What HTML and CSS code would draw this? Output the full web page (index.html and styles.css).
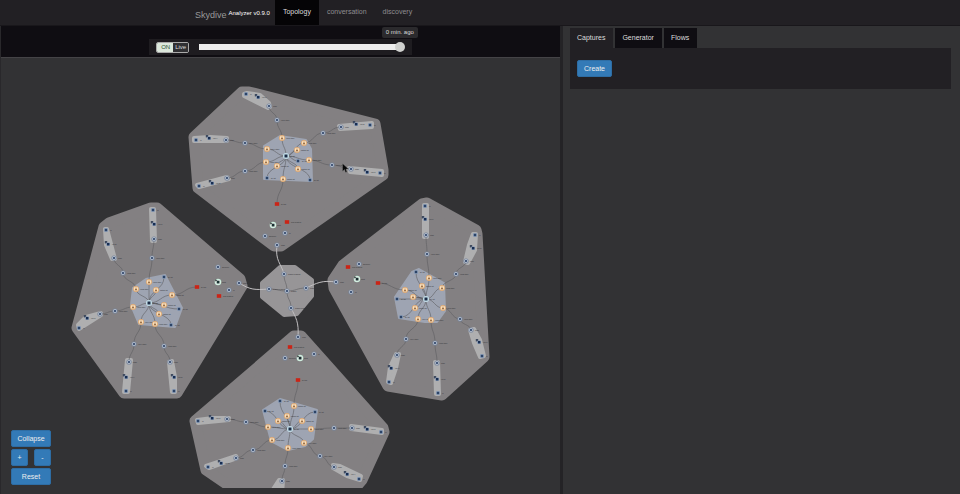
FILE: index.html
```html
<!DOCTYPE html>
<html lang="en">
<head>
<meta charset="utf-8">
<title>Skydive Analyzer</title>
<link rel="stylesheet" href="styles.css">
</head>
<body>
<header class="navbar">
  <nav class="navbar-inner">
    <div class="brand"><span class="brand-name">Skydive</span><span class="brand-version">Analyzer v0.9.0</span></div>
    <a class="nav-link active" href="#topology">Topology</a>
    <a class="nav-link" href="#conversation">conversation</a>
    <a class="nav-link" href="#discovery">discovery</a>
  </nav>
</header>
<main class="content">
  <section class="topology">
    <div class="timebar">
      <div class="time-control">
        <label class="toggle"><input type="checkbox" checked><span class="toggle-on">ON</span><span class="toggle-name">Live</span></label>
        <div class="slider">
          <input type="range" min="0" max="100" value="100" aria-label="Time">
          <output class="tooltip">0 min. ago</output>
        </div>
      </div>
    </div>
    <div class="canvas">
      <svg id="graph" class="graph" viewBox="1 58 559 430" role="img" aria-label="Topology graph">
        <defs>
          <g id="port"><circle r="2.6" fill="#75849c"/><circle r="1.9" fill="#b4bdca"/><rect x="-1" y="-1" width="2" height="2" fill="#465a7c"/></g>
          <g id="iface"><rect x="-2" y="-2" width="4" height="4" rx="1" fill="#8fa0ba"/><rect x="-1.2" y="-1.2" width="2.4" height="2.4" fill="#2c4366"/></g>
          <g id="ns"><rect x="-3.2" y="-3" width="2.4" height="2.4" fill="#3f4a5e"/><rect x="-1.8" y="-1.6" width="3.8" height="3.6" rx="1" fill="#8296b5"/><rect x="-1" y="-1" width="2.4" height="2.4" fill="#182d50"/></g>
          <g id="peer"><circle r="3" fill="#e0a870"/><circle r="2.3" fill="#f9dfbc"/><path d="M0-1.5V0M-1.1 1L0 0l1.100 1z" stroke="#95693f" stroke-width=".7" fill="#95693f"/></g>
          <g id="hub"><circle r="3" fill="#c6e2ec"/><rect x="-1.5" y="-1.5" width="3" height="3" fill="#1b2b45"/></g>
          <g id="host"><circle r="3.3" fill="#bfe8d4"/><circle r="2.6" fill="#eef5f2"/><rect x="-1.3" y="-1.3" width="2.8" height="2.8" fill="#17312f"/><path d="M-3-2.6l2.4.6-1.8 1.6z" fill="#242b2b"/></g>
          <g id="switch"><rect x="-2.200" y="-1.8" width="4.400" height="3.6" fill="#cb2416"/></g>
        </defs>
      </svg>
      <div class="zoom-controls">
        <button class="btn wide" type="button">Collapse</button>
        <button class="btn" type="button">+</button>
        <button class="btn" type="button">-</button>
        <button class="btn wide" type="button">Reset</button>
      </div>
    </div>
  </section>
  <aside class="side">
    <div class="tabs" role="tablist">
      <button class="tab active" type="button" role="tab" aria-selected="true">Captures</button>
      <button class="tab" type="button" role="tab">Generator</button>
      <button class="tab" type="button" role="tab">Flows</button>
    </div>
    <div class="tab-panel" role="tabpanel">
      <button class="btn" type="button">Create</button>
    </div>
  </aside>
</main>
<script src="topology.js"></script>
</body>
</html>
```
FILE: styles.css
```css
* { box-sizing: border-box; }

body {
  margin: 0;
  min-height: 100vh;
  display: flex;
  flex-direction: column;
  background: #323234;
  color: #ddd;
  font: 7px/10px "Liberation Sans", Arial, sans-serif;
}

button, input { font: inherit; color: inherit; }

.navbar { background: #222024; border-bottom: 1px solid #19171b; }

.navbar-inner {
  display: flex;
  max-width: 570px;
  margin: 0 auto;
  height: 25px;
}

.brand { display: flex; align-items: center; gap: 2px; padding-right: 5px; color: #999; }
.brand-name { font-size: 9px; padding-top: 4px; }
.brand-version { font-size: 6px; color: #fff; }

.nav-link {
  padding: 7px 8px;
  color: #8e8d90;
  text-decoration: none;
}
.nav-link.active { background: #050406; color: #ddd; }

.content { flex: 1; display: grid; grid-template-columns: 7fr 5fr; }

.topology { display: flex; flex-direction: column; border-left: 1px solid #29282b; padding-bottom: 6px; }

.timebar {
  display: flex;
  justify-content: center;
  padding: 13px 0 2px;
  background: #0f0d12;
  border-bottom: 1px solid #444346;
}

.time-control {
  display: flex;
  align-items: center;
  gap: 10px;
  width: 47%;
  height: 16px;
  padding: 0 7px;
  background: #1e1c20;
}

.toggle {
  display: flex;
  height: 11px;
  border: 1px solid #aaa;
  border-radius: 2px;
  overflow: hidden;
  line-height: 9px;
  font-size: 6px;
}
.toggle input { position: absolute; opacity: 0; width: 1px; height: 1px; margin: 0; }
.toggle-on { padding: 0 3px 0 4px; background: #dce8dc; color: #24542c; }
.toggle-name { padding: 0 2px; background: #303033; }

.slider { position: relative; flex: 1; display: flex; }
.slider input {
  appearance: none;
  width: 100%;
  height: 10px;
  margin: 0;
  background: linear-gradient(#eee, #eee) left center / 98% 6px no-repeat;
}
.slider input::-webkit-slider-thumb {
  appearance: none;
  width: 10px;
  height: 10px;
  border-radius: 50%;
  background: #d0d1cf;
}
.tooltip {
  position: absolute;
  right: -13px;
  bottom: 14px;
  padding: 0 4px;
  border-radius: 2px;
  background: #2b2a2d;
  font-size: 6px;
  line-height: 11px;
  white-space: nowrap;
}

.canvas { position: relative; flex: 1; display: flex; }
.graph { width: 100%; height: auto; }

.link { fill: none; stroke: #5d5d60; stroke-width: 1px; opacity: 0.6; }
.link.uplink { stroke: #c2c0c2; opacity: 1; }
.node-label { font-size: 2px; fill: #303034; }
.hull { stroke-linejoin: round; }
.hull.host { fill: #838082; stroke: #838082; stroke-width: 11px; }
.hull.rack { fill: #979597; stroke: #979597; stroke-width: 4px; }
.hull.switch { fill: #9ea4b2; stroke: #9ea4b2; stroke-width: 2px; }
.hull.space { fill: #afafb0; stroke: #afafb0; stroke-width: 4px; }

.zoom-controls {
  position: absolute;
  left: 10px;
  bottom: 3px;
  display: grid;
  grid-template-columns: 17px 17px;
  gap: 2px 6px;
}

.btn {
  height: 17px;
  padding: 0;
  border: 1px solid #2e6da4;
  border-radius: 2px;
  background: #337ab7;
  color: #eee;
  line-height: 15px;
}
.btn.wide { grid-column: span 2; }

.side { border-left: 3px solid #242326; padding: 2px 9px 0 7px; }
.tabs { display: flex; gap: 2px; }
.tab {
  height: 20px;
  padding: 0 8px 0 7px;
  border: 0;
  background: #0f0d12;
  color: #ddd;
}
.tab.active { background: #222024; }
.tab-panel { padding: 12px 7px; background: #222024; }
.tab-panel .btn { padding: 0 6px; }
```
FILE: topology.js
```js
// Each region: its outline, its switch outline, the hub, the leaf nodes and the
// branches (space outline, its nodes, the middle port and the switch port).
const regions = [
  {
    hull: [[194,137],[242,92],[249,92],[375,124],[383,170],[383,175],[281,246],[274,246],[198,188]],
    area: [[264,146],[280,136],[306,140],[311,149],[312,181],[264,179]],
    hub: [286,156],
    peers: [[297,150],[277,166],[298,169],[283,179]],
    ifaces: [[298,161],[267,178],[310,180]],
    gateway: [283,179], switches: [[277,204],[287,222]], host: [273,225],
    ports: [[265,236],[285,233],[277,245]],
    branches: [
      [[[244,94],[247,93],[260,95],[269,103],[270,107],[268,108],[244,96]], [[246,94],[258,97],[269,106]], [277,120], [282,138]],
      [[[339,126],[372,123],[372,127],[340,129]], [[370,125],[356,124],[341,127]], [323,133], [304,143]],
      [[[349,168],[382,171],[382,175],[350,172]], [[380,173],[367,172],[351,169]], [332,165], [309,160]],
      [[[194,138],[210,137],[227,138],[227,141],[194,141]], [[196,140],[209,138],[226,140]], [245,143], [267,149]],
      [[[197,185],[227,177],[229,179],[199,187]], [[199,186],[212,183],[227,178]], [245,171], [266,162]]
    ]
  },
  {
    hull: [[104,227],[109,223],[151,208],[157,208],[240,279],[242,286],[177,393],[124,393],[77,328]],
    area: [[133,288],[146,279],[165,275],[182,308],[175,327],[139,324],[131,305]],
    hub: [149,303],
    peers: [[156,290],[172,295],[164,305],[159,314]],
    ifaces: [[164,277],[179,309],[171,325]],
    gateway: [172,295], switches: [[197,287],[219,296]], host: [218,282],
    ports: [[218,267],[229,290],[239,283]],
    branches: [
      [[[151,209],[154,209],[155,241],[152,241]], [[153,210],[154,224],[154,239]], [152,258], [149,282]],
      [[[105,229],[107,229],[115,259],[112,259],[106,245]], [[106,230],[108,244],[114,258]], [123,273], [136,289]],
      [[[78,325],[86,317],[101,313],[101,315],[79,329]], [[79,328],[87,318],[100,314]], [115,311], [133,307]],
      [[[127,360],[131,360],[128,392],[124,392]], [[126,391],[126,377],[129,362]], [134,344], [141,322]],
      [[[169,362],[172,361],[175,377],[175,392],[172,392]], [[174,391],[174,377],[170,362]], [164,346], [155,324]]
    ]
  },
  {
    hull: [[422,204],[427,203],[476,230],[477,234],[484,357],[442,395],[388,386],[334,288],[333,280],[343,265]],
    area: [[395,297],[412,272],[419,269],[444,283],[445,311],[437,322],[425,322],[399,318]],
    hub: [426,299],
    peers: [[422,286],[405,290],[413,297],[415,308]],
    ifaces: [[416,272],[397,299],[401,317]],
    gateway: [405,290], switches: [[378,283],[348,267]], host: [357,279],
    ports: [[359,264],[351,292],[336,282]],
    branches: [
      [[[424,205],[427,205],[427,237],[424,237]], [[425,206],[425,219],[426,235]], [427,254], [429,278]],
      [[[473,234],[476,234],[475,250],[468,263],[465,262],[469,245]], [[475,235],[473,248],[466,261]], [456,274], [442,288]],
      [[[470,330],[474,329],[480,340],[484,356],[480,357],[474,343]], [[482,356],[479,342],[471,330]], [460,319], [443,308]],
      [[[396,354],[399,354],[396,368],[391,383],[388,382],[390,367]], [[389,382],[391,368],[397,355]], [406,339], [418,319]],
      [[[435,362],[438,362],[439,394],[436,394]], [[438,393],[437,379],[437,363]], [435,343], [431,320]]
    ]
  },
  {
    hull: [[294,336],[301,336],[383,428],[384,432],[362,480],[345,500],[250,500],[206,470],[195,421]],
    area: [[263,410],[280,399],[317,410],[313,439],[305,446],[288,450],[271,441]],
    hub: [290,429],
    peers: [[294,406],[287,416],[278,421],[302,421]],
    ifaces: [[280,401],[265,411],[315,412]],
    gateway: [294,406], switches: [[298,380],[290,347]], host: [300,358],
    ports: [[285,358],[314,354],[298,337]],
    branches: [
      [[[197,420],[213,418],[229,418],[229,420],[198,423]], [[198,421],[212,418],[227,419]], [246,422], [268,427]],
      [[[206,466],[236,456],[237,458],[209,468]], [[208,467],[221,463],[236,458]], [253,450], [272,440]],
      [[[351,426],[382,430],[382,433],[351,429]], [[381,432],[367,429],[352,428]], [334,428], [311,429]],
      [[[333,465],[340,466],[361,476],[360,480],[347,476],[333,468]], [[359,479],[347,474],[334,467]], [320,456], [304,443]],
      [[[270,494],[279,480],[283,480],[282,494]], [null, null, [282,481]], [285,466], [288,448]]
    ]
  }
];

const rack = [[280,267],[295,267],[312,280],[312,296],[297,314],[284,315],[262,297],[262,283]];
const rackPorts = [[284,274],[269,289],[306,288],[291,308]];
const rackHub = [287,291];
const uplinks = [
  "M277 245C275 261 281 263 284 274",
  "M239 283C251 290 254 290 269 289",
  "M336 282C322 280 317 283 306 288",
  "M298 337C299 322 296 318 291 308"
];

const parts = [];
const hull = (points, kind) => parts.push(`<polygon class="hull ${kind}" points="${points.join(" ")}"/>`);
const path = (d, kind = "") => parts.push(`<path class="link ${kind}" d="${d}"/>`);
const node = (kind, point, label) => {
  if (!point) return;
  const [x, y] = point;
  parts.push(`<use href="#${kind}" x="${x}" y="${y}"/>`);
  parts.push(`<text class="node-label" x="${x + 4}" y="${y + 1}">${label}</text>`);
};
// A link leaves and arrives along the longer of its two axes.
const link = ([x1, y1], [x2, y2]) => {
  const mx = (x1 + x2) / 2, my = (y1 + y2) / 2;
  path(Math.abs(x2 - x1) > Math.abs(y2 - y1)
    ? `M${x1} ${y1}C${mx} ${y1} ${mx} ${y2} ${x2} ${y2}`
    : `M${x1} ${y1}C${x1} ${my} ${x2} ${my} ${x2} ${y2}`);
};

regions.forEach(r => {
  hull(r.hull, "host");
  hull(r.area, "switch");
  r.branches.forEach(b => hull(b[0], "space"));
  [...r.peers, ...r.ifaces].forEach(p => link(r.hub, p));
  link(r.gateway, r.switches[0]);
  r.branches.forEach(([, nodes, mid, peer]) => {
    link(nodes[2], mid);
    link(mid, peer);
    link(peer, r.hub);
  });
});
hull(rack, "rack");
rackPorts.forEach(p => link(rackHub, p));
uplinks.forEach(d => path(d, "uplink"));

regions.forEach(r => {
  r.branches.forEach(([, nodes, mid, peer], i) => {
    node("iface", nodes[0], "lo");
    node("ns", nodes[1], `vm-${i + 1}`);
    node("port", nodes[2], "eth0");
    node("port", mid, `vm${i + 1}-eth0`);
    node("peer", peer, `vm${i + 1}-eth0`);
  });
  r.peers.forEach(p => node("peer", p, "patch-int"));
  r.ifaces.forEach(p => node("iface", p, "br-int"));
  node("hub", r.hub, "br-int");
  node("switch", r.switches[0], "br-tun");
  node("switch", r.switches[1], "ovs-system");
  node("host", r.host, "host");
  node("port", r.ports[0], "docker0");
  node("port", r.ports[1], "lo");
  node("port", r.ports[2], "eth0");
});
rackPorts.forEach((p, i) => node("port", p, `TOR1 PORT${i + 1}`));
node("port", rackHub, "TOR1");
parts.push('<path d="M342.500 163.500v8l2-2 1 3 1.500-.6-1-2.800h2.500z" fill="#080808" stroke="#999" stroke-width=".3"/>');

document.getElementById("graph").insertAdjacentHTML("beforeend", parts.join(""));
```
